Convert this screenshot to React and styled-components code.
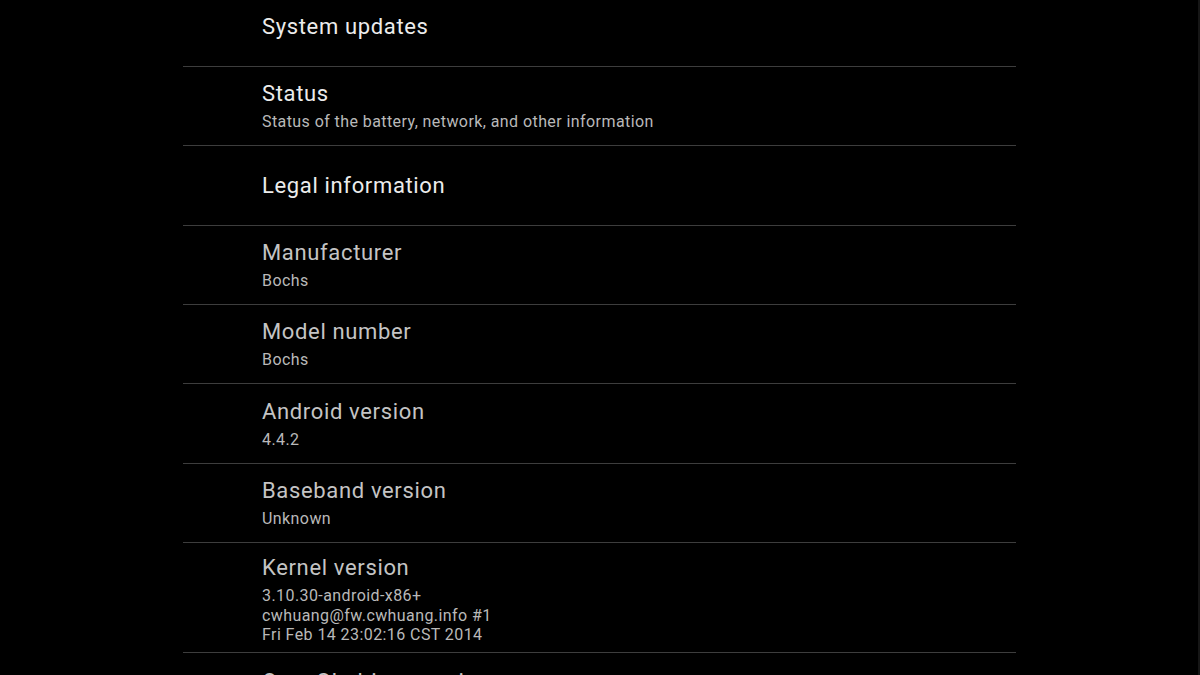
import React from "react";
import styled, { createGlobalStyle } from "styled-components";

const Global = createGlobalStyle`
  html, body {
    margin: 0;
    padding: 0;
    background: #000;
    overflow: hidden;
  }
  body {
    font-family: Roboto, "Noto Sans", "Liberation Sans", sans-serif;
  }
`;

const Screen = styled.div`
  width: 1200px;
  height: 675px;
  background: #000;
  overflow: hidden;
  box-sizing: border-box;
  border-right: 2px solid #161616;
`;

const List = styled.ul`
  list-style: none;
  margin: -12.3px 0 0 183px;
  padding: 0;
  width: 833px;
`;

const Row = styled.li`
  box-sizing: border-box;
  min-height: 79.33px;
  padding: ${(p) => (p.$multi ? "11px 0 7.5px 79px" : "0 0 0 79px")};
  border-bottom: 1px solid #3d3d3d;
  display: flex;
  flex-direction: column;
  justify-content: center;
`;

const Title = styled.div`
  font-size: 22px;
  line-height: 28px;
  color: ${(p) => (p.$dim ? "#c4c4c4" : "#ececec")};
  letter-spacing: 0.65px;
  white-space: nowrap;
`;

const Summary = styled.div`
  margin-top: 4px;
  font-size: 16px;
  line-height: 19.5px;
  color: #b9b9b9;
  letter-spacing: 0.42px;
  white-space: pre-line;
`;

const items = [
  { title: "System updates" },
  { title: "Status", summary: "Status of the battery, network, and other information" },
  { title: "Legal information" },
  { title: "Manufacturer", summary: "Bochs", dim: true },
  { title: "Model number", summary: "Bochs", dim: true },
  { title: "Android version", summary: "4.4.2", dim: true },
  { title: "Baseband version", summary: "Unknown", dim: true },
  {
    title: "Kernel version",
    summary: "3.10.30-android-x86+\ncwhuang@fw.cwhuang.info #1\nFri Feb 14 23:02:16 CST 2014",
    dim: true,
    multi: true,
  },
  { title: "OpenGL driver version", summary: "Mesa 10.1.0", dim: true, multi: true },
];

export default function App() {
  return (
    <>
      <Global />
      <Screen>
        <List>
          {items.map((it) => (
            <Row key={it.title} $multi={it.multi}>
              <Title $dim={it.dim}>{it.title}</Title>
              {it.summary && <Summary>{it.summary}</Summary>}
            </Row>
          ))}
        </List>
      </Screen>
    </>
  );
}
